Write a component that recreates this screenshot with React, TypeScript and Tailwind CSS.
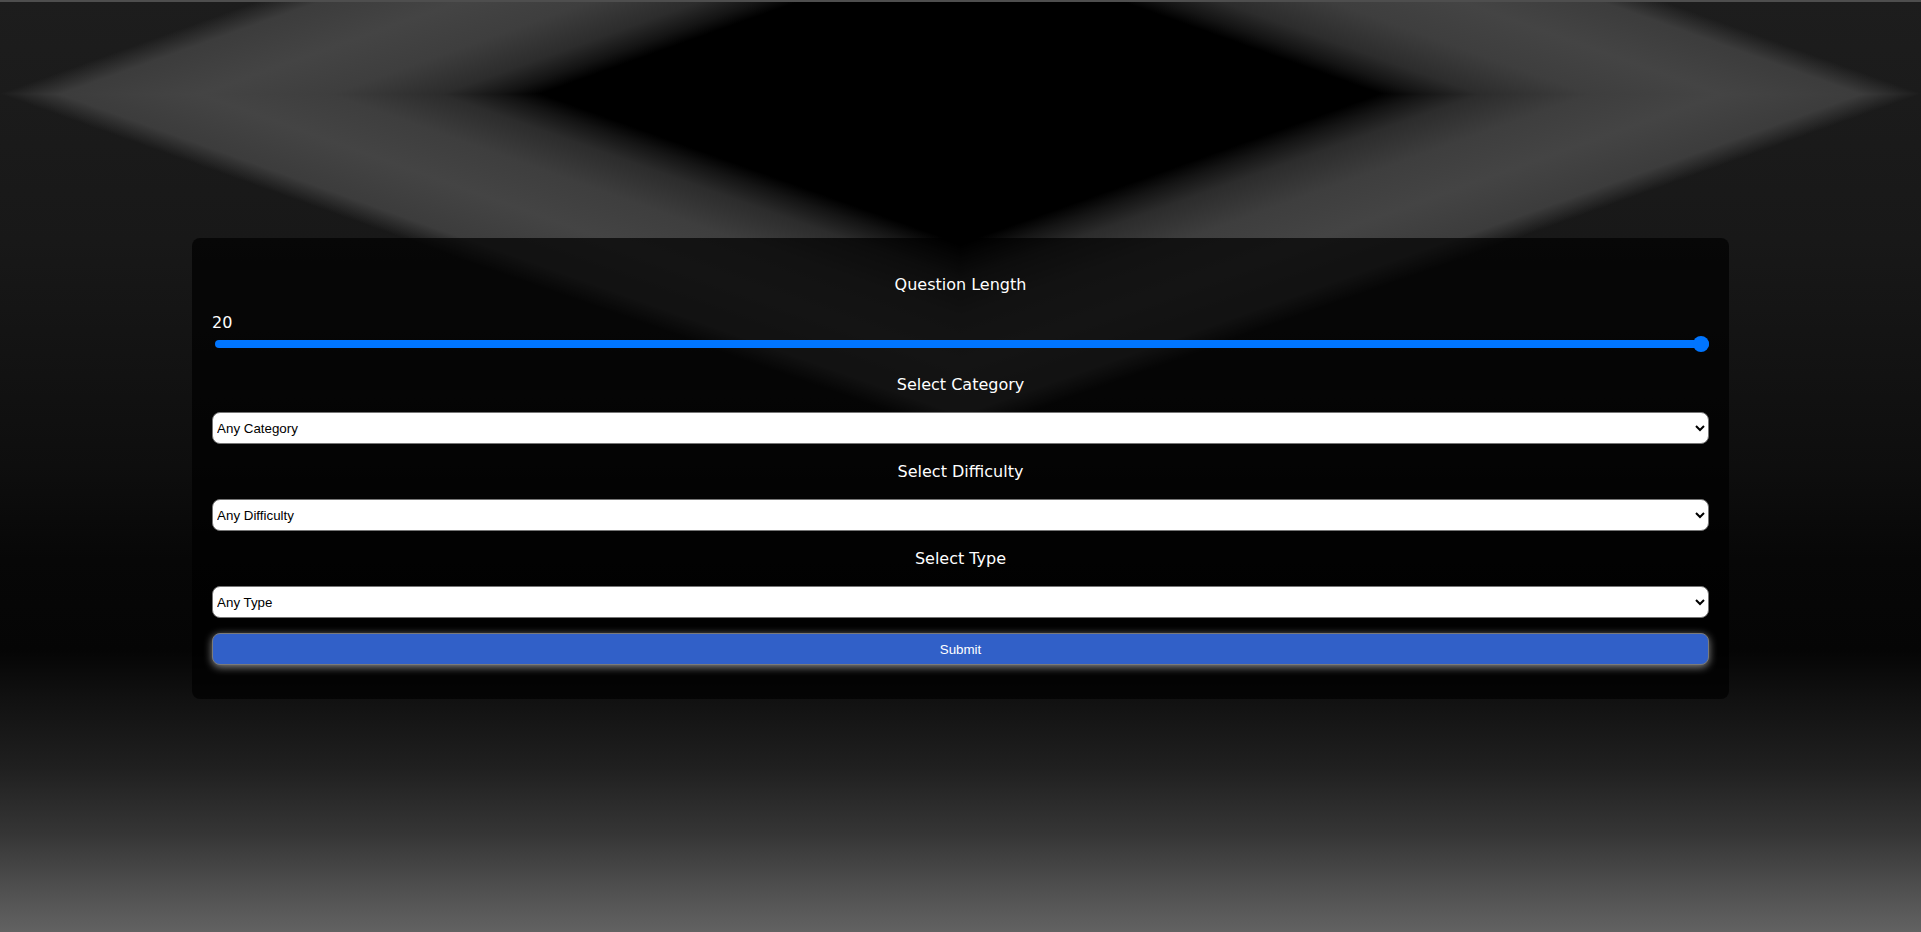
import React from "react";

const labelCls =
  "text-center text-white text-[16px] leading-[19px] font-['DejaVu_Sans',sans-serif]";
const selectCls =
  "block w-full h-8 rounded-lg border border-[#767676] bg-white text-black text-[13.333px] font-['Liberation_Sans',Arial,sans-serif]";

export default function App() {
  return (
    <div className="min-h-screen w-full bg-no-repeat [background-image:linear-gradient(160.35deg,transparent_88px,#3c3c3c_109px,#444444_156px,#3e3e3e_200px,#2c2c2c_237px,#141414_257px,#000000_270px),linear-gradient(199.65deg,transparent_88px,#3c3c3c_109px,#444444_156px,#3e3e3e_200px,#2c2c2c_237px,#141414_257px,#000000_270px),linear-gradient(19.65deg,transparent_323px,#3c3c3c_343px,#444444_390px,#3e3e3e_434px,#2c2c2c_471px,#141414_491px,#000000_505px),linear-gradient(340.35deg,transparent_323px,#3c3c3c_343px,#444444_390px,#3e3e3e_434px,#2c2c2c_471px,#141414_491px,#000000_505px),linear-gradient(to_bottom,#1d1d1d_0px,#181818_240px,#0e0e0e_466px,#070707_560px,#050505_650px,#111111_699px,#1f1f1f_766px,#353535_833px,#545454_899px,#626262_932px)] [background-size:961px_94px,961px_94px,961px_343px,961px_343px,100%_100%] [background-position:left_top,right_top,left_94px,right_94px,left_top]">
      <div className="h-[2px] bg-[#4e4e4e]" />
      <div className="mx-auto mt-[236px] w-[80%] rounded-lg bg-black/70 px-5 pt-[37px] pb-[34px]">
        <div className={labelCls}>Question Length</div>
        <div className="mt-[19px] text-left text-white text-[16px] leading-[19px] font-['DejaVu_Sans',sans-serif]">
          20
        </div>
        <div className="relative mt-[4px] flex h-4 items-center pl-[3px]">
          <div className="h-2 w-full rounded-full bg-[#0075ff]" />
          <div className="absolute right-0 top-0 h-4 w-4 rounded-full bg-[#0075ff]" />
        </div>

        <div className={`mt-[23px] ${labelCls}`}>Select Category</div>
        <select className={`mt-[18px] ${selectCls}`} defaultValue="any">
          <option value="any">Any Category</option>
          <option value="9">General Knowledge</option>
          <option value="10">Entertainment: Books</option>
        </select>

        <div className={`mt-[18px] ${labelCls}`}>Select Difficulty</div>
        <select className={`mt-[18px] ${selectCls}`} defaultValue="any">
          <option value="any">Any Difficulty</option>
          <option value="easy">Easy</option>
          <option value="medium">Medium</option>
          <option value="hard">Hard</option>
        </select>

        <div className={`mt-[18px] ${labelCls}`}>Select Type</div>
        <select className={`mt-[18px] ${selectCls}`} defaultValue="any">
          <option value="any">Any Type</option>
          <option value="multiple">Multiple Choice</option>
          <option value="boolean">True / False</option>
        </select>

        <button
          type="button"
          className="mt-[15px] block h-8 w-full rounded-lg border border-[#7a7a7a] bg-[#3160c8] pt-[2px] text-center text-white text-[13.333px] font-['Liberation_Sans',Arial,sans-serif] shadow-[0_2px_8px_rgba(255,255,255,0.55)]"
        >
          Submit
        </button>
      </div>
    </div>
  );
}
